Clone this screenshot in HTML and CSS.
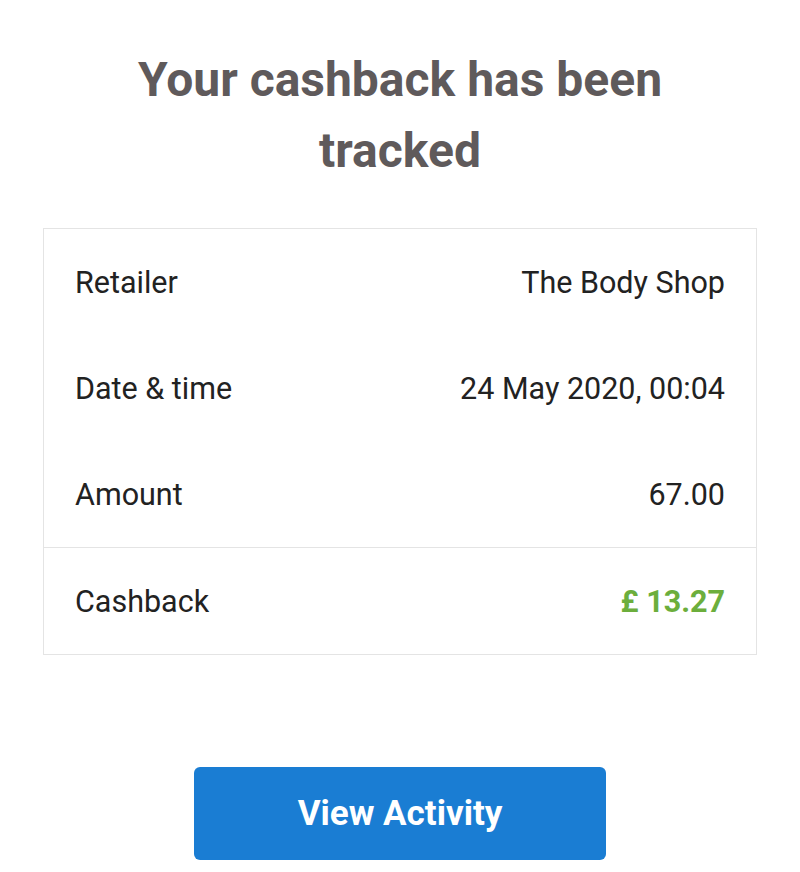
FILE: index.html
```html
<!DOCTYPE html>
<html lang="en">
<head>
    <meta charset="UTF-8">
    <title>Cashback tracked</title>
    <link rel="stylesheet" href="styles.css">
</head>
<body>

<div class="page">
    <h1 class="title">Your cashback has been tracked</h1>

    <div class="summary">
        <div class="row">
            <span class="label">Retailer</span>
            <span class="value">The Body Shop</span>
        </div>
        <div class="row">
            <span class="label">Date &amp; time</span>
            <span class="value">24 May 2020, 00:04</span>
        </div>
        <div class="row">
            <span class="label">Amount</span>
            <span class="value">67.00</span>
        </div>
        <div class="row total">
            <span class="label">Cashback</span>
            <span class="value cashback">£ 13.27</span>
        </div>
    </div>

    <button class="activity-btn">View Activity</button>
</div>

</body>
</html>
```

FILE: styles.css
```css
body {
    margin: 0;
    background: #fff;
    font-family: Roboto, "Liberation Sans", sans-serif;
}
.page {
    display: flex;
    flex-direction: column;
    align-items: center;
    padding: 44px 43px 0;
}
.title {
    margin: 0;
    width: 600px;
    font-size: 48px;
    line-height: 71px;
    font-weight: 700;
    color: #5f5a5b;
    text-align: center;
}
.summary {
    align-self: stretch;
    margin-top: 42px;
    border: 1px solid #e4e4e4;
}
.row {
    display: flex;
    justify-content: space-between;
    align-items: center;
    height: 106px;
    padding: 0 31px 0 31px;
    font-size: 30.5px;
    color: #222;
}
.row.total {
    border-top: 1px solid #e4e4e4;
}
.cashback {
    color: #6cae3c;
    font-weight: 700;
}
.activity-btn {
    margin-top: 112px;
    width: 412px;
    height: 93px;
    border: none;
    border-radius: 6px;
    background: #1a7dd3;
    color: #fff;
    font-family: inherit;
    font-size: 35px;
    font-weight: 700;
}
```
